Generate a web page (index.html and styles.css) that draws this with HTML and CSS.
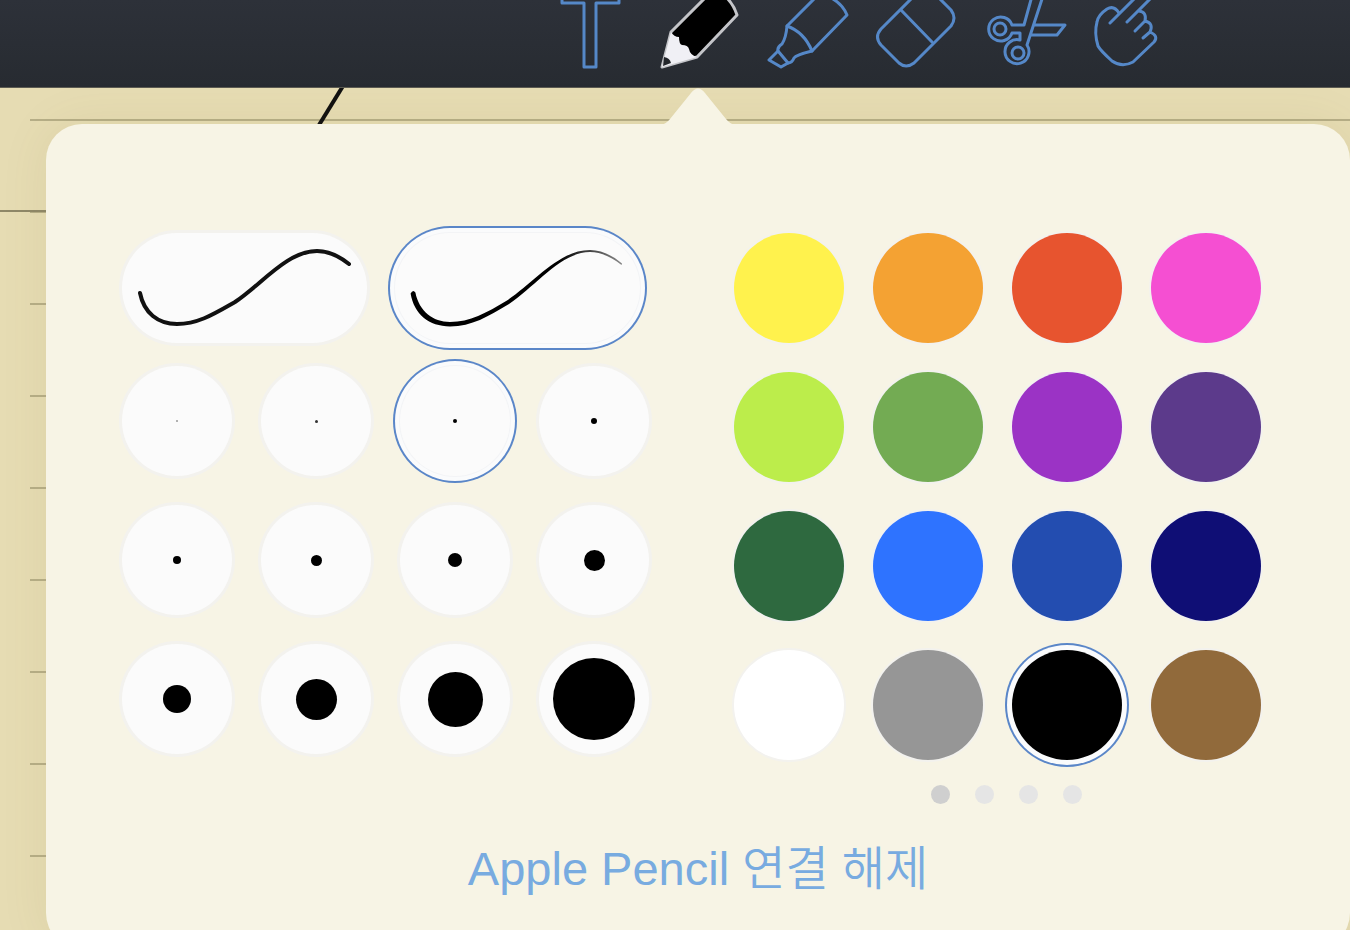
FILE: index.html
```
<!DOCTYPE html>
<html lang="ko">
<head>
    <meta charset="UTF-8">
    <meta name="viewport" content="width=device-width, initial-scale=1.0">
    <title>필기 도구</title>
    <link rel="stylesheet" href="styles.css">
</head>
<body>
    <!-- 상단 도구 모음 -->
    <header class="toolbar">
        <button class="tool" aria-label="텍스트">
            <svg viewBox="0 0 108 88"><path d="M26 -10V3H48V67H60V3H83V-10"/></svg>
        </button>
        <button class="tool" aria-label="펜" aria-pressed="true">
            <svg viewBox="0 0 108 88">
                <path class="pencil-body" d="M18 67L27 32L62 -3H82Q90 5 93 15L53 57Z"/>
                <path class="pencil-wood" d="M18 67L27 32Q30 37 35 37Q35 44 38 45Q44 45 45 49Q46 55 53 57Z"/>
                <path class="pencil-lead" d="M20 57Q26 58 27 63L19 66Z"/>
            </svg>
        </button>
        <button class="tool" aria-label="형광펜">
            <svg viewBox="0 0 108 88">
                <path d="M65 -4L35 26Q34 38 30 44Q25 47 26 51L17 60L29 67L36 63Q40 63 42 58Q44 55 60 51L95 15Q91 5 81 -1"/>
                <path d="M35 26Q52 32 60 51M26 51L36 63"/>
            </svg>
        </button>
        <button class="tool" aria-label="지우개">
            <svg viewBox="0 0 108 88">
                <path d="M79 -2L91 10Q97 18 91 26L54 63Q46 69 39 63L21 45Q14 37 21 29L52 -2"/>
                <path d="M41 10L72 42"/>
            </svg>
        </button>
        <button class="tool" aria-label="가위">
            <svg viewBox="0 0 108 88">
                <circle cx="32" cy="29" r="6"/>
                <circle cx="50" cy="53" r="6"/>
                <path d="M44 25H56L64 -4M44 33H52V40M44 25A12 12 0 1 0 44 33M52 40A12 12 0 1 0 59 45L75 -4M67 25H97L89 35H64"/>
            </svg>
        </button>
        <button class="tool" aria-label="손">
            <svg viewBox="0 0 108 88">
                <path d="M34 23L61 -4M51 22L76 -3"/>
                <path d="M43 13Q38 5 31 9Q22 15 21 22Q18 33 22 46Q24 50 36 61Q46 68 57 62L78 42Q83 36 74 32L67 38M63 11Q71 12 69 21L59 31M69 21Q78 23 74 32"/>
            </svg>
        </button>
    </header>

    <!-- 노트 배경 -->
    <main class="note">
        <svg class="ink" viewBox="0 0 30 36"><path d="M27 -2L3 37"/></svg>

        <!-- 펜 설정 팝오버 -->
        <section class="popover">
            <svg class="arrow" viewBox="0 0 74 37"><path d="M0 37Q5 36 9 31L30 5Q37 -4 44 5L65 31Q69 36 74 37Z"/></svg>

            <div class="panels">
                <div class="pen-panel">
                    <!-- 펜 종류 -->
                    <div class="styles">
                        <button class="pen" aria-label="일정한 굵기">
                            <svg viewBox="0 0 245 110"><path class="even" d="M18 60C22 80 36 91 55 91C76 91 92 81 113 69C140 51 165 18 195 18C206 18 217 23 227 31"/></svg>
                        </button>
                        <button class="pen selected" aria-label="필압" aria-pressed="true">
                            <svg viewBox="0 0 245 110">
                                <defs>
                                    <linearGradient id="fade">
                                        <stop offset="0.7" stop-color="#000"/>
                                        <stop offset="1" stop-color="#888"/>
                                    </linearGradient>
                                </defs>
                                <path fill="url(#fade)" d="M20.4 59.5C24 78 38 89 55 89C75 89 91 80 112 67.5C139 49.5 164 17 195 17C206 17 217 22 227 30.5L226.5 32C217 24.5 206 19 195 19C166 19 141 53 114 71C93 83.5 77 93.4 55 93.4C34 93.4 19 81 15.6 60.5Q18 56 20.4 59.5Z"/>
                            </svg>
                        </button>
                    </div>

                    <!-- 펜 굵기 -->
                    <div class="grid">
                        <button class="size" aria-label="굵기 1"><span class="dot dot-1"></span></button>
                        <button class="size" aria-label="굵기 2"><span class="dot dot-2"></span></button>
                        <button class="size selected" aria-label="굵기 3" aria-pressed="true"><span class="dot dot-3"></span></button>
                        <button class="size" aria-label="굵기 4"><span class="dot dot-4"></span></button>
                        <button class="size" aria-label="굵기 5"><span class="dot dot-5"></span></button>
                        <button class="size" aria-label="굵기 6"><span class="dot dot-6"></span></button>
                        <button class="size" aria-label="굵기 7"><span class="dot dot-7"></span></button>
                        <button class="size" aria-label="굵기 8"><span class="dot dot-8"></span></button>
                        <button class="size" aria-label="굵기 9"><span class="dot dot-9"></span></button>
                        <button class="size" aria-label="굵기 10"><span class="dot dot-10"></span></button>
                        <button class="size" aria-label="굵기 11"><span class="dot dot-11"></span></button>
                        <button class="size" aria-label="굵기 12"><span class="dot dot-12"></span></button>
                    </div>
                </div>

                <!-- 색상 -->
                <div class="color-panel">
                    <div class="grid">
                        <button class="color yellow" aria-label="노랑"></button>
                        <button class="color orange" aria-label="주황"></button>
                        <button class="color red" aria-label="빨강"></button>
                        <button class="color pink" aria-label="분홍"></button>
                        <button class="color lime" aria-label="연두"></button>
                        <button class="color green" aria-label="초록"></button>
                        <button class="color purple" aria-label="보라"></button>
                        <button class="color violet" aria-label="진보라"></button>
                        <button class="color forest" aria-label="진초록"></button>
                        <button class="color sky" aria-label="하늘"></button>
                        <button class="color blue" aria-label="파랑"></button>
                        <button class="color navy" aria-label="남색"></button>
                        <button class="color white" aria-label="흰색"></button>
                        <button class="color gray" aria-label="회색"></button>
                        <button class="color black selected" aria-label="검정" aria-pressed="true"></button>
                        <button class="color brown" aria-label="갈색"></button>
                    </div>
                    <div class="pager">
                        <button class="page current" aria-label="1페이지"></button>
                        <button class="page" aria-label="2페이지"></button>
                        <button class="page" aria-label="3페이지"></button>
                        <button class="page" aria-label="4페이지"></button>
                    </div>
                </div>
            </div>

            <button class="disconnect">Apple Pencil 연결 해제</button>
        </section>
    </main>
</body>
</html>
```
FILE: styles.css
```
* {
    box-sizing: border-box;
}

body {
    margin: 0;
    height: 100vh;
    display: flex;
    flex-direction: column;
    overflow: hidden;
    font-family: "Liberation Sans", "Noto Sans CJK KR", sans-serif;
}

button {
    padding: 0;
    border: none;
    background: none;
    font: inherit;
    cursor: pointer;
}

svg {
    display: block;
}

/* 상단 도구 모음 */
.toolbar {
    flex: none;
    display: flex;
    justify-content: center;
    height: 88px;
    padding-left: 370px;
    background: linear-gradient(#2d3139, #272b31);
    border-bottom: 1px solid #5c5b52;
}

.tool {
    width: 108px;
    height: 88px;
}

.tool svg {
    width: 108px;
    height: 88px;
    fill: none;
    stroke: #5588c8;
    stroke-width: 3;
    stroke-linecap: round;
    stroke-linejoin: round;
}

.tool .pencil-body {
    fill: #000;
    stroke: #c4c5c9;
}

.tool .pencil-wood {
    fill: #f0f0f5;
    stroke: none;
}

.tool .pencil-lead {
    fill: #23262b;
    stroke: none;
}

/* 노트 배경과 줄, 반복 줄은 왼쪽 여백 30px 다음부터 그림 */
.note {
    position: relative;
    flex: 1;
    padding: 36px 0 0 46px;
    background:
        linear-gradient(#8f8868, #8f8868) 0 122px / 100% 2px no-repeat,
        linear-gradient(transparent 31px, #b6ae87 31px, #b6ae87 33px, transparent 33px) 30px 0 / 100% 92px repeat-y,
        #e6dcb3;
}

.ink {
    position: absolute;
    top: 0;
    left: 316px;
    width: 30px;
    height: 36px;
    fill: none;
    stroke: #111;
    stroke-width: 4;
}

/* 팝오버 */
.popover {
    position: relative;
    padding: 109px 76px 48px;
    border-radius: 36px;
    background-color: #f7f4e5;
    box-shadow: 0 0 50px rgba(120, 100, 30, 0.08);
}

.arrow {
    position: absolute;
    top: -36px;
    left: 50%;
    width: 74px;
    height: 37px;
    margin-left: -37px;
    fill: #f7f4e5;
}

.panels {
    display: flex;
    gap: 85px;
}

.styles {
    display: flex;
    gap: 28px;
    margin-bottom: 23px;
}

.grid {
    display: grid;
    grid-template-columns: repeat(4, 110px);
    gap: 29px;
}

.pen,
.size,
.color {
    height: 110px;
    border-radius: 55px;
    background-color: #fbfbfb;
    box-shadow: 0 0 0 3px #f3f2ee;
}

.pen {
    width: 245px;
}

.pen svg {
    width: 245px;
    height: 110px;
}

.even {
    fill: none;
    stroke: #111;
    stroke-width: 4;
    stroke-linecap: round;
}

.size {
    display: flex;
    align-items: center;
    justify-content: center;
}

.selected {
    box-shadow: 0 0 0 1px #f3f4f6, 0 0 0 5px #fafbfc, 0 0 0 7px #5a86c8;
}

/* 굵기 점 */
.dot {
    border-radius: 50%;
    background-color: #000;
}

.dot-1 { width: 2px; height: 2px; background-color: #999; }
.dot-2 { width: 3px; height: 3px; background-color: #333; }
.dot-3 { width: 4px; height: 4px; }
.dot-4 { width: 6px; height: 6px; }
.dot-5 { width: 8px; height: 8px; }
.dot-6 { width: 11px; height: 11px; }
.dot-7 { width: 14px; height: 14px; }
.dot-8 { width: 21px; height: 21px; }
.dot-9 { width: 28px; height: 28px; }
.dot-10 { width: 41px; height: 41px; }
.dot-11 { width: 55px; height: 55px; }
.dot-12 { width: 82px; height: 82px; }

/* 색상 */
.color {
    box-shadow: 0 0 0 2px #f3f2ee;
}

.color.selected {
    box-shadow: 0 0 0 5px #fafbfc, 0 0 0 7px #5a86c8;
}

.yellow { background-color: #fff24d; }
.orange { background-color: #f4a233; }
.red { background-color: #e7542f; }
.pink { background-color: #f54fd2; }
.lime { background-color: #bced4b; }
.green { background-color: #73ab53; }
.purple { background-color: #9b33c5; }
.violet { background-color: #5c3a8b; }
.forest { background-color: #2e693f; }
.sky { background-color: #2e73ff; }
.blue { background-color: #234db0; }
.navy { background-color: #0f0e75; }
.white { background-color: #fff; }
.gray { background-color: #969696; }
.black { background-color: #000; }
.brown { background-color: #916a3b; }

.pager {
    display: flex;
    justify-content: center;
    gap: 25px;
    margin-top: 25px;
    padding-left: 18px;
}

.page {
    width: 19px;
    height: 19px;
    border-radius: 50%;
    background-color: #e5e5e5;
}

.current {
    background-color: #cfcfcf;
}

.disconnect {
    display: block;
    margin: 33px auto 0;
    color: #78abe0;
    font-size: 47px;
    font-weight: 350;
    line-height: 64px;
    white-space: nowrap;
}
```
